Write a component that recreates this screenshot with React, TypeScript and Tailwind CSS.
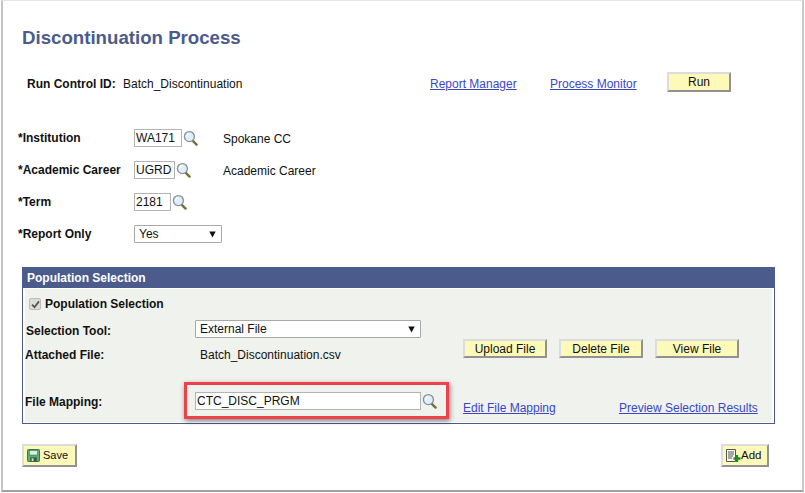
import React from "react";

function Lens({ className = "" }: { className?: string }) {
  return (
    <svg width="15" height="16" viewBox="0 0 15 16" className={className}>
      <path d="M9.8 10.8 L13.6 14.6" stroke="#75713a" strokeWidth="2.4" strokeLinecap="round" />
      <circle cx="6.4" cy="6.6" r="5" fill="#dfeef8" stroke="#858f96" strokeWidth="1.3" />
      <path d="M3.6 6.4 A2.9 2.9 0 0 1 6.4 3.5" fill="none" stroke="#ffffff" strokeWidth="1.2" />
    </svg>
  );
}

function Btn({ children, className = "" }: { children: React.ReactNode; className?: string }) {
  return (
    <button
      className={
        "flex items-center justify-center border-2 border-t-[#dcdcdc] border-l-[#dcdcdc] border-r-[#919191] border-b-[#919191] bg-[#fdf9b9] text-[12px] leading-none text-[#111] " +
        className
      }
    >
      {children}
    </button>
  );
}

function TextBox({ value, className = "" }: { value: string; className?: string }) {
  return (
    <input
      readOnly
      value={value}
      className={
        "h-[18px] border border-[#b4b4b4] bg-white pb-[1px] pl-[1px] text-[12px] text-[#111] outline-none " + className
      }
    />
  );
}

function Select({ value, className = "" }: { value: string; className?: string }) {
  return (
    <div
      className={
        "flex h-[18px] items-center justify-between rounded-[1px] border border-[#a8a8a8] bg-white pl-[4px] pr-[5px] text-[12px] text-[#111] " +
        className
      }
    >
      <span>{value}</span>
      <svg width="7" height="7" viewBox="0 0 7 7">
        <path d="M0.3 0.5 H6.7 L3.5 6.5 Z" fill="#111" />
      </svg>
    </div>
  );
}

function LinkText({ children, className = "" }: { children: React.ReactNode; className?: string }) {
  return <a className={"text-[12px] text-[#3a46c8] underline " + className}>{children}</a>;
}

function FieldRow({
  label,
  value,
  width,
  desc,
}: {
  label: string;
  value: string;
  width: string;
  desc?: string;
}) {
  return (
    <div className="flex h-[18px] items-center">
      <span className="w-[131px] pl-[15px] text-[12px] font-bold text-[#111]">{label}</span>
      <TextBox value={value} className={width} />
      <Lens className="ml-[1px] shrink-0" />
      {desc && <span className="absolute left-[220px] mt-[2px] text-[12px] text-[#111]">{desc}</span>}
    </div>
  );
}

export default function App() {
  return (
    <div
      className="h-[493px] w-[805px] overflow-hidden bg-white text-[#111]"
      style={{ fontFamily: '"Liberation Sans", Arial, sans-serif' }}
    >
      <div className="relative ml-[1px] h-[492px] w-[803px] border-t border-l-2 border-r-2 border-b-2 border-t-[#e6e6e6] border-l-[#c4c4c4] border-r-[#c8c8c8] border-b-[#a0a0a0]">
        <h1 className="ml-[19px] mt-[26px] text-[18.67px] font-bold leading-[22px] text-[#4a5b8c]">
          Discontinuation Process
        </h1>

        <div className="mt-[23px] flex h-[20px] items-center">
          <span className="ml-[24px] mt-[4px] w-[96px] text-[12px] font-bold">Run Control ID:</span>
          <span className="mt-[4px] w-[307px] text-[12px]">Batch_Discontinuation</span>
          <LinkText className="mt-[4px] w-[120px]">Report Manager</LinkText>
          <LinkText className="mt-[4px] w-[117px]">Process Monitor</LinkText>
          <Btn className="h-[20px] w-[64px]">Run</Btn>
        </div>

        <div className="mt-[37px] flex flex-col gap-[14px]">
          <FieldRow label="*Institution" value="WA171" width="w-[48px]" desc="Spokane CC" />
          <FieldRow label="*Academic Career" value="UGRD" width="w-[41px]" desc="Academic Career" />
          <FieldRow label="*Term" value="2181" width="w-[37px]" />
          <div className="flex h-[18px] items-center">
            <span className="w-[131px] pl-[15px] text-[12px] font-bold">*Report Only</span>
            <Select value="Yes" className="w-[88px]" />
          </div>
        </div>

        <section className="relative ml-[19px] mt-[24px] h-[157px] w-[753px] border border-[#4a5b8c] bg-white">
          <div className="flex h-[20px] items-center bg-[#4a5b8c] pl-[4px] text-[12px] font-bold text-white">
            Population Selection
          </div>
          <div className="mx-[2px] mt-[1px] h-[133px] bg-[#f0f2ee]">
            <div className="flex h-[31px] items-center pb-[1px] pl-[4px]">
              <span className="flex h-[12px] w-[12px] items-center justify-center rounded-[2px] border border-[#bdbdbd] bg-[#dcdcdc]">
                <svg width="9" height="9" viewBox="0 0 9 9">
                  <path d="M1 4.6 L3.5 7.2 L8 1.4" fill="none" stroke="#555" strokeWidth="1.8" />
                </svg>
              </span>
              <span className="ml-[4px] text-[12px] font-bold">Population Selection</span>
            </div>

            <div className="flex">
              <div className="w-[438px]">
                <div className="flex h-[18px] items-center">
                  <span className="mt-[3px] w-[170px] pl-[1px] text-[12px] font-bold">Selection Tool:</span>
                  <Select value="External File" className="w-[226px]" />
                </div>
                <div className="mt-[7px] flex h-[20px] items-center">
                  <span className="w-[175px] text-[12px] font-bold">Attached File:</span>
                  <span className="text-[12px]">Batch_Discontinuation.csv</span>
                </div>
              </div>
              <div className="mt-[19px] flex gap-[12px]">
                <Btn className="h-[19px] w-[84px]">Upload File</Btn>
                <Btn className="h-[19px] w-[84px]">Delete File</Btn>
                <Btn className="h-[19px] w-[84px]">View File</Btn>
              </div>
            </div>

            <div className="mt-[27px] flex h-[18px] items-center">
              <span className="mt-[2px] w-[170px] text-[12px] font-bold">File Mapping:</span>
              <TextBox value="CTC_DISC_PRGM" className="w-[226px]" />
              <Lens className="ml-[1px] shrink-0" />
              <LinkText className="ml-[26px] mt-[13px] w-[156px]">Edit File Mapping</LinkText>
              <LinkText className="mt-[13px]">Preview Selection Results</LinkText>
            </div>
          </div>

          <div className="absolute left-[161px] top-[114px] h-[37px] w-[265px] border-[3px] border-[#f0404a] shadow-[1px_2px_5px_rgba(0,0,0,0.45)]" />
        </section>

        <div className="ml-[19px] mt-[20px] flex w-[747px] items-center justify-between">
          <Btn className="h-[23px] w-[55px] !justify-start gap-[3px] pl-[3px]">
            <svg width="13" height="13" viewBox="0 0 14 14">
              <rect x="0.5" y="0.5" width="13" height="13" rx="1" fill="#5fae74" stroke="#2f6b45" />
              <rect x="2.5" y="1.5" width="9" height="5" fill="#d9efe0" stroke="#2f6b45" strokeWidth="0.6" />
              <rect x="3.5" y="9" width="7" height="4.5" fill="#2f5f45" />
              <rect x="5" y="10" width="2" height="3" fill="#cfe6d6" />
            </svg>
            <span className="text-[11px]">Save</span>
          </Btn>
          <Btn className="h-[23px] w-[48px] !justify-start pl-[3px]">
            <svg width="15" height="14" viewBox="0 0 15 14" className="shrink-0">
              <path d="M0.5 0.5 H9.5 V12.5 H0.5 Z" fill="#f7f7ee" stroke="#555" />
              <path d="M2 3 H8 M2 5 H8 M2 7 H7 M2 9 H6" stroke="#555" strokeWidth="1" />
              <path d="M11 6 V13 M7.5 9.5 H14.5" stroke="#1e8a2c" strokeWidth="2.4" />
            </svg>
            <span className="text-[11.5px]">Add</span>
          </Btn>
        </div>
      </div>
    </div>
  );
}
